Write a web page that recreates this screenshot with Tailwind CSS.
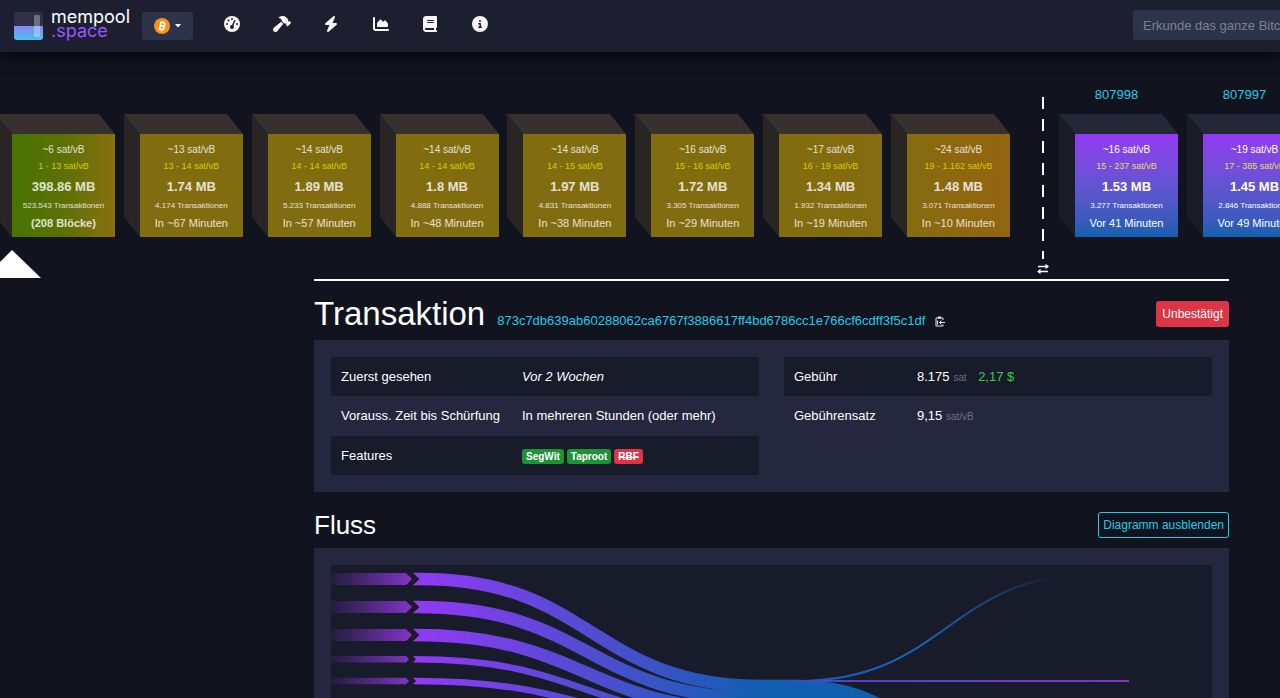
<!DOCTYPE html>
<html lang="de">
<head>
<meta charset="utf-8">
<meta name="viewport" content="width=device-width, initial-scale=1">
<title>Transaktion – mempool.space</title>
<script src="https://cdn.jsdelivr.net/npm/@tailwindcss/browser@4"></script>
</head>
<body class="h-screen overflow-hidden bg-[#11131f] font-['Liberation_Sans',Arial,sans-serif] text-[13px] text-white">

<svg class="hidden" aria-hidden="true">
  <symbol id="cube-mempool" viewBox="0 0 119 123">
    <path d="M0 0H103L119 20H16Z" fill="#38302f"/>
    <path d="M0 0L16 20V123L0 103Z" fill="#292525"/>
  </symbol>
  <symbol id="cube-chain" viewBox="0 0 119 123">
    <path d="M0 0H103L119 20H16Z" fill="#232738"/>
    <path d="M0 0L16 20V123L0 103Z" fill="#191b27"/>
  </symbol>
</svg>

<header class="flex h-[52px] items-center bg-[#1d1f31] pl-3.5 shadow-[0_0_15px_0_#000]">
  <a href="#" class="flex items-center gap-2" aria-label="mempool.space">
    <svg class="h-7 w-[29px]" viewBox="0 0 29 28">
      <defs>
        <linearGradient id="logo" x1="0" y1="0" x2="0" y2="1"><stop offset="0" stop-color="#8a84f5"/><stop offset="1" stop-color="#45c5ea"/></linearGradient>
        <clipPath id="logoclip"><rect width="29" height="28" rx="3"/></clipPath>
      </defs>
      <g clip-path="url(#logoclip)">
        <rect width="29" height="28" fill="#2e3149"/>
        <rect y="14" width="29" height="14" fill="url(#logo)"/>
        <rect x="20" y="3" width="6" height="22" rx="1" fill="#fff" opacity=".3"/>
      </g>
    </svg>
    <span class="flex w-[79px] flex-col pb-1 font-['Inter',sans-serif] text-[18px] leading-[14px]">
      <span>mempool</span>
      <span class="text-[#9857ff]">.space</span>
    </span>
  </a>
  <button class="ml-3 flex h-7 w-[51px] items-center justify-center gap-1 rounded-[3px] bg-[#2d3348]" aria-label="Netzwerk wählen">
    <svg class="size-4" viewBox="0 0 16 16"><circle cx="8" cy="8" r="8" fill="#f7931a"/><g transform="rotate(14 8 8)" fill="none" stroke="#fff" stroke-width="1.5"><path d="M5 4.6H8.7a1.6 1.6 0 0 1 0 3.3H6.3M6.3 7.9H9.1a1.8 1.8 0 0 1 0 3.5H5M6.3 4.6V11.4"/><path d="M7.2 2.8V4.6M9.2 2.8V4.6M7.2 11.4V13.2M9.2 11.4V13.2" stroke-width="1"/></g></svg>
    <svg class="h-1 w-2" viewBox="0 0 8 4"><path d="M1 0H7L4 3.5Z" fill="#fff"/></svg>
  </button>
  <nav class="ml-3.5 flex pb-1">
    <a href="#" aria-label="Dashboard" class="flex w-[50px] justify-center"><svg class="h-4 w-5" viewBox="0 0 512 512"><circle cx="256" cy="256" r="256" fill="#f5f5fa"/><g fill="#1d1f31"><circle cx="256" cy="96" r="32"/><circle cx="144" cy="144" r="32"/><circle cx="96" cy="256" r="32"/><circle cx="416" cy="256" r="32"/><circle cx="256" cy="352" r="64"/><path d="M352 130a24 24 0 0 1 12 32L290 330L246 311L320 142a24 24 0 0 1 32-12Z"/></g></svg></a>
    <a href="#" aria-label="Mining" class="flex w-[49px] justify-center"><svg class="h-4 w-5" viewBox="0 0 576 512" fill="#f5f5fa"><path d="M413.5 237.5c-28.2 4.8-58.2-3.6-80-25.4l-38.1-38.1C280.4 159 272 138.8 272 117.6V105.5L192.3 62c-5.3-2.9-8.6-8.6-8.3-14.7s3.9-11.5 9.5-14l47.2-21C259.1 4.2 279 0 299.2 0h18.1c36.7 0 72 14 98.7 39.1l44.6 42c24.2 22.8 33.2 55.7 26.6 86L503 183l8-8c9.4-9.4 24.6-9.4 33.9 0l24 24c9.4 9.4 9.4 24.6 0 33.9l-88 88c-9.4 9.4-24.6 9.4-33.9 0l-24-24c-9.4-9.4-9.4-24.6 0-33.9l8-8-17.5-17.5zM27.4 377.1L260.9 182.6c3.5 4.9 7.5 9.6 11.8 14l38.1 38.1c6 6 12.4 11.2 19.2 15.7L134.9 484.6c-14.5 17.4-36 27.4-58.6 27.4C34.1 512 0 477.8 0 435.7c0-22.6 10.1-44.1 27.4-58.6z"/></svg></a>
    <a href="#" aria-label="Lightning" class="flex w-[50px] justify-center"><svg class="h-4 w-5" viewBox="0 0 448 512" fill="#f5f5fa"><path d="M349.4 44.6c5.9-13.7 1.5-29.7-10.6-38.5s-28.6-8-39.9 1.8l-256 224c-10 8.8-13.6 22.9-8.9 35.3S50.7 288 64 288H175.5L98.6 467.4c-5.9 13.7-1.5 29.7 10.6 38.5s28.6 8 39.9-1.8l256-224c10-8.8 13.6-22.9 8.9-35.3s-16.6-20.7-30-20.7H272.5L349.4 44.6z"/></svg></a>
    <a href="#" aria-label="Grafiken" class="flex w-[49px] justify-center"><svg class="h-4 w-5" viewBox="0 0 512 512" fill="#f5f5fa"><path d="M64 64c0-17.7-14.3-32-32-32S0 46.3 0 64V400c0 44.2 35.8 80 80 80H480c17.7 0 32-14.3 32-32s-14.3-32-32-32H80c-8.8 0-16-7.2-16-16V64zm96 288H448c17.7 0 32-14.3 32-32V251.8c0-7.6-2.7-15-7.7-20.8l-65.8-76.8c-12.1-14.2-33.7-15-46.9-1.8l-21 21c-10 10-26.4 9.2-35.4-1.6l-39.2-47c-12.6-15.1-35.7-15.4-48.7-.6L135.9 215c-5.1 5.8-7.9 13.3-7.9 21.1v84c0 17.7 14.3 32 32 32z"/></svg></a>
    <a href="#" aria-label="Dokumentation" class="flex w-[50px] justify-center"><svg class="h-4 w-5" viewBox="0 0 448 512" fill="#f5f5fa"><path d="M96 0C43 0 0 43 0 96V416c0 53 43 96 96 96H384h32c17.7 0 32-14.3 32-32s-14.3-32-32-32V384c17.7 0 32-14.3 32-32V32c0-17.7-14.3-32-32-32H384 96zm0 384H352v64H96c-17.7 0-32-14.3-32-32s14.3-32 32-32zm32-240c0-8.8 7.2-16 16-16H336c8.8 0 16 7.2 16 16s-7.2 16-16 16H144c-8.8 0-16-7.2-16-16zm16 48H336c8.8 0 16 7.2 16 16s-7.2 16-16 16H144c-8.8 0-16-7.2-16-16s7.2-16 16-16z"/></svg></a>
    <a href="#" aria-label="Über" class="flex w-[49px] justify-center"><svg class="h-4 w-5" viewBox="0 0 512 512" fill="#f5f5fa"><path d="M256 512A256 256 0 1 0 256 0a256 256 0 1 0 0 512zM216 336h24V272H216c-13.3 0-24-10.7-24-24s10.7-24 24-24h48c13.3 0 24 10.7 24 24v88h8c13.3 0 24 10.7 24 24s-10.7 24-24 24H216c-13.3 0-24-10.7-24-24s10.7-24 24-24zm40-208a32 32 0 1 1 0 64 32 32 0 1 1 0-64z"/></svg></a>
  </nav>
  <form class="-mr-44 ml-auto w-[323px] shrink-0 pb-0.5">
    <input type="text" aria-label="Suche" placeholder="Erkunde das ganze Bitcoin-Ökosystem" class="block h-[30px] w-full rounded-[3px] bg-[#2d3348] px-2.5 text-[13px] placeholder:text-[#7c8192]">
  </form>
</header>

<section class="flex h-[227px] items-start overflow-hidden" aria-label="Blöcke">
  <div class="-ml-1 mt-[62px] flex w-[1014px] shrink-0 justify-between">
    <a href="#" class="relative block w-[119px] pt-5 pl-4">
      <svg class="absolute inset-0 h-[123px] w-[119px]"><use href="#cube-mempool"/></svg>
      <div class="relative flex h-[103px] flex-col items-center bg-linear-to-r from-[#477400] via-[#5c7006] to-[#88700f] pt-[9px] text-white/80">
        <div class="text-[10px] leading-[14px]">~6 sat/vB</div>
        <div class="text-[9px] leading-[18px] text-[#d5ce00]">1 - 13 sat/vB</div>
        <div class="text-[13px] leading-[23px] font-bold">398.86 MB</div>
        <div class="text-[8px] leading-[15px]">523.543 Transaktionen</div>
        <div class="text-[11px] leading-5 font-bold">(208 Blöcke)</div>
      </div>
      <svg class="absolute top-[136px] -left-3 h-7 w-[57px]" viewBox="0 0 57 28"><path d="M28 0L57 28H0Z" fill="#fff"/></svg>
    </a>
    <a href="#" class="relative block w-[119px] pt-5 pl-4">
      <svg class="absolute inset-0 h-[123px] w-[119px]"><use href="#cube-mempool"/></svg>
      <div class="relative flex h-[103px] flex-col items-center bg-[#826c10] pt-[9px] text-white/80">
        <div class="text-[10px] leading-[14px]">~13 sat/vB</div>
        <div class="text-[9px] leading-[18px] text-[#d5ce00]">13 - 14 sat/vB</div>
        <div class="text-[13px] leading-[23px] font-bold">1.74 MB</div>
        <div class="text-[8px] leading-[15px]">4.174 Transaktionen</div>
        <div class="text-[11px] leading-5">In ~67 Minuten</div>
      </div>
    </a>
    <a href="#" class="relative block w-[119px] pt-5 pl-4">
      <svg class="absolute inset-0 h-[123px] w-[119px]"><use href="#cube-mempool"/></svg>
      <div class="relative flex h-[103px] flex-col items-center bg-[#826c10] pt-[9px] text-white/80">
        <div class="text-[10px] leading-[14px]">~14 sat/vB</div>
        <div class="text-[9px] leading-[18px] text-[#d5ce00]">14 - 14 sat/vB</div>
        <div class="text-[13px] leading-[23px] font-bold">1.89 MB</div>
        <div class="text-[8px] leading-[15px]">5.233 Transaktionen</div>
        <div class="text-[11px] leading-5">In ~57 Minuten</div>
      </div>
    </a>
    <a href="#" class="relative block w-[119px] pt-5 pl-4">
      <svg class="absolute inset-0 h-[123px] w-[119px]"><use href="#cube-mempool"/></svg>
      <div class="relative flex h-[103px] flex-col items-center bg-[#826c10] pt-[9px] text-white/80">
        <div class="text-[10px] leading-[14px]">~14 sat/vB</div>
        <div class="text-[9px] leading-[18px] text-[#d5ce00]">14 - 14 sat/vB</div>
        <div class="text-[13px] leading-[23px] font-bold">1.8 MB</div>
        <div class="text-[8px] leading-[15px]">4.888 Transaktionen</div>
        <div class="text-[11px] leading-5">In ~48 Minuten</div>
      </div>
    </a>
    <a href="#" class="relative block w-[119px] pt-5 pl-4">
      <svg class="absolute inset-0 h-[123px] w-[119px]"><use href="#cube-mempool"/></svg>
      <div class="relative flex h-[103px] flex-col items-center bg-[#826c10] pt-[9px] text-white/80">
        <div class="text-[10px] leading-[14px]">~14 sat/vB</div>
        <div class="text-[9px] leading-[18px] text-[#d5ce00]">14 - 15 sat/vB</div>
        <div class="text-[13px] leading-[23px] font-bold">1.97 MB</div>
        <div class="text-[8px] leading-[15px]">4.831 Transaktionen</div>
        <div class="text-[11px] leading-5">In ~38 Minuten</div>
      </div>
    </a>
    <a href="#" class="relative block w-[119px] pt-5 pl-4">
      <svg class="absolute inset-0 h-[123px] w-[119px]"><use href="#cube-mempool"/></svg>
      <div class="relative flex h-[103px] flex-col items-center bg-[#826c10] pt-[9px] text-white/80">
        <div class="text-[10px] leading-[14px]">~16 sat/vB</div>
        <div class="text-[9px] leading-[18px] text-[#d5ce00]">15 - 16 sat/vB</div>
        <div class="text-[13px] leading-[23px] font-bold">1.72 MB</div>
        <div class="text-[8px] leading-[15px]">3.305 Transaktionen</div>
        <div class="text-[11px] leading-5">In ~29 Minuten</div>
      </div>
    </a>
    <a href="#" class="relative block w-[119px] pt-5 pl-4">
      <svg class="absolute inset-0 h-[123px] w-[119px]"><use href="#cube-mempool"/></svg>
      <div class="relative flex h-[103px] flex-col items-center bg-linear-to-r from-[#826c10] to-[#866b10] pt-[9px] text-white/80">
        <div class="text-[10px] leading-[14px]">~17 sat/vB</div>
        <div class="text-[9px] leading-[18px] text-[#d5ce00]">16 - 19 sat/vB</div>
        <div class="text-[13px] leading-[23px] font-bold">1.34 MB</div>
        <div class="text-[8px] leading-[15px]">1.932 Transaktionen</div>
        <div class="text-[11px] leading-5">In ~19 Minuten</div>
      </div>
    </a>
    <a href="#" class="relative block w-[119px] pt-5 pl-4">
      <svg class="absolute inset-0 h-[123px] w-[119px]"><use href="#cube-mempool"/></svg>
      <div class="relative flex h-[103px] flex-col items-center bg-linear-to-r from-[#866b10] to-[#93640f] pt-[9px] text-white/80">
        <div class="text-[10px] leading-[14px]">~24 sat/vB</div>
        <div class="text-[9px] leading-[18px] text-[#d5ce00]">19 - 1.162 sat/vB</div>
        <div class="text-[13px] leading-[23px] font-bold">1.48 MB</div>
        <div class="text-[8px] leading-[15px]">3.071 Transaktionen</div>
        <div class="text-[11px] leading-5">In ~10 Minuten</div>
      </div>
    </a>
  </div>

  <div class="mt-[45px] ml-[25px] flex w-4 shrink-0 flex-col items-center gap-1">
    <svg class="h-[162px] w-0.5" viewBox="0 0 2 162"><path d="M1 0V162" stroke="#fff" stroke-width="2" stroke-dasharray="12 10"/></svg>
    <button aria-label="Zeitrichtung umkehren"><svg class="h-3 w-3" viewBox="0 0 12 12"><path d="M1 3.5H9M3 8.5H11" stroke="#fff" stroke-width="1.5"/><path d="M8.500 .8L12 3.500L8.500 6.200ZM3.500 5.800L0 8.500L3.500 11.200Z" fill="#fff"/></svg></button>
  </div>

  <div class="mt-[34px] ml-2 flex shrink-0 gap-[9px]">
    <div class="w-[119px]">
      <a href="#" class="block h-7 pr-1 text-center text-[13px] leading-[18px] text-[#22cbe6]">807998</a>
      <a href="#" class="relative block pt-5 pl-4">
        <svg class="absolute inset-0 h-[123px] w-[119px]"><use href="#cube-chain"/></svg>
        <div class="relative flex h-[103px] flex-col items-center bg-linear-to-b from-[#9339f4] to-[#105fb0] pt-[9px]">
          <div class="text-[10px] leading-[14px]">~16 sat/vB</div>
          <div class="text-[9px] leading-[18px] text-[#f0dc5a]">15 - 237 sat/vB</div>
          <div class="text-[13px] leading-[23px] font-bold">1.53 MB</div>
          <div class="text-[8px] leading-[15px]">3.277 Transaktionen</div>
          <div class="text-[11px] leading-5">Vor 41 Minuten</div>
        </div>
      </a>
    </div>
    <div class="w-[119px]">
      <a href="#" class="block h-7 pr-1 text-center text-[13px] leading-[18px] text-[#22cbe6]">807997</a>
      <a href="#" class="relative block pt-5 pl-4">
        <svg class="absolute inset-0 h-[123px] w-[119px]"><use href="#cube-chain"/></svg>
        <div class="relative flex h-[103px] flex-col items-center bg-linear-to-b from-[#9339f4] to-[#105fb0] pt-[9px]">
          <div class="text-[10px] leading-[14px]">~19 sat/vB</div>
          <div class="text-[9px] leading-[18px] text-[#f0dc5a]">17 - 385 sat/vB</div>
          <div class="text-[13px] leading-[23px] font-bold">1.45 MB</div>
          <div class="text-[8px] leading-[15px]">2.846 Transaktionen</div>
          <div class="text-[11px] leading-5">Vor 49 Minuten</div>
        </div>
      </a>
    </div>
  </div>
</section>

<main class="mr-[51px] ml-[314px] border-t-2 border-white">
  <div class="flex h-[59px] items-start justify-between pt-[13px]">
    <div class="flex items-baseline">
      <h1 class="text-[33px] leading-10">Transaktion</h1>
      <a href="#" class="ml-3 text-[13px] text-[#22cbe6]">873c7db639ab60288062ca6767f3886617ff4bd6786cc1e766cf6cdff3f5c1df</a>
      <button class="ml-2.5 self-center pt-3.5" aria-label="Kopieren"><svg class="h-[11px] w-2.5" viewBox="0 0 10 11" fill="none" stroke="#e8e8ee"><path d="M8 4V2H1V10H8V8.500"/><path d="M3 1.500H6" stroke-width="2"/><path d="M10 6.500H5M6.500 4.500L4.500 6.500L6.500 8.500M2.500 4.500V8.500"/></svg></button>
    </div>
    <button class="mt-[7px] h-[26px] rounded-[3px] bg-[#dc3545] px-1.5 text-[12px]">Unbestätigt</button>
  </div>

  <section class="grid grid-cols-2 items-start gap-[25px] bg-[#24273e] p-[17px]">
    <table class="w-full table-fixed text-left">
      <colgroup><col class="w-[181px]"><col></colgroup>
      <tr class="h-[39px] bg-[#181b2a]"><th class="pl-2.5 font-normal whitespace-nowrap">Zuerst gesehen</th><td class="pl-2.5 italic">Vor 2 Wochen</td></tr>
      <tr class="h-10"><th class="pl-2.5 font-normal whitespace-nowrap">Vorauss. Zeit bis Schürfung</th><td class="pl-2.5">In mehreren Stunden (oder mehr)</td></tr>
      <tr class="h-[39px] bg-[#181b2a]"><th class="pl-2.5 font-normal">Features</th><td class="pl-2.5"><div class="flex gap-[3px] pt-0.5 text-[10px] leading-[15px] font-bold"><span class="rounded-[3px] bg-[#1d9237] px-1">SegWit</span><span class="rounded-[3px] bg-[#1d9237] px-1">Taproot</span><span class="rounded-[3px] bg-[#dc3545] px-1 line-through">RBF</span></div></td></tr>
    </table>
    <table class="w-full table-fixed text-left">
      <colgroup><col class="w-[123px]"><col></colgroup>
      <tr class="h-[39px] bg-[#181b2a]"><th class="pl-2.5 font-normal">Gebühr</th><td class="pl-2.5">8.175 <span class="text-[10px] text-[#6b6f84]">sat</span> <span class="ml-2 text-[#3bcc49]">2,17 $</span></td></tr>
      <tr class="h-10"><th class="pl-2.5 font-normal">Gebührensatz</th><td class="pl-2.5">9,15 <span class="text-[10px] text-[#6b6f84]">sat/vB</span></td></tr>
    </table>
  </section>

  <div class="flex h-14 items-center justify-between pt-2.5">
    <h2 class="text-[26px]">Fluss</h2>
    <button class="h-[26px] rounded-[3px] border border-[#22cbe6] px-1 text-[12px] text-[#22cbe6]">Diagramm ausblenden</button>
  </div>

  <section class="bg-[#24273e] p-[17px]">
    <div class="bg-[#181b2a]">
      <svg class="h-[300px] w-full" viewBox="331 565 881 300" preserveAspectRatio="xMinYMin slice">
        <defs>
          <linearGradient id="in" gradientUnits="userSpaceOnUse" x1="414" y1="0" x2="765" y2="0"><stop offset="0" stop-color="#9339f4"/><stop offset="1" stop-color="#105fb0"/></linearGradient>
          <linearGradient id="lead" gradientUnits="userSpaceOnUse" x1="331" y1="0" x2="412" y2="0"><stop offset="0" stop-color="#8134c8" stop-opacity=".1"/><stop offset="1" stop-color="#8134c8"/></linearGradient>
          <linearGradient id="fee" gradientUnits="userSpaceOnUse" x1="797" y1="0" x2="1060" y2="0"><stop offset="0" stop-color="#105fb0"/><stop offset=".5" stop-color="#1a62b4"/><stop offset="1" stop-color="#1a62b4" stop-opacity="0"/></linearGradient>
          <linearGradient id="out" gradientUnits="userSpaceOnUse" x1="780" y1="0" x2="1129" y2="0"><stop offset="0" stop-color="#105fb0"/><stop offset=".1" stop-color="#4747c8"/><stop offset="1" stop-color="#8134c8"/></linearGradient>
        </defs>
        <g fill="url(#lead)">
          <path d="M331 573H406L412 579L406 585H331Z"/>
          <path d="M331 601H406L412 607L406 613H331Z"/>
          <path d="M331 629H406L412 635L406 641H331Z"/>
          <path d="M331 656H406L409 659.300L406 662.600H331Z"/>
          <path d="M331 677.700H406L409 681L406 684.300H331Z"/>
        </g>
        <g fill="none" stroke="url(#in)">
          <path stroke-width="12.500" d="M413 579H421C592 579 592 686 763 686H800"/>
          <path stroke-width="12.500" d="M413 607H418C589 607 589 698 760 698H800"/>
          <path stroke-width="12.500" d="M413 635H415C586 635 586 710 757 710H800"/>
          <path stroke-width="6.600" d="M413 659.300H415C586 659.300 586 719.500 757 719.500"/>
          <path stroke-width="6.600" d="M413 681H415C586 681 586 726 757 726"/>
        </g>
        <g fill="#181b2a">
          <path d="M412 572L419.500 579L412 586ZM412 600L419.500 607L412 614ZM412 628L419.500 635L412 642ZM412 655L416 659.300L412 663.600ZM412 676.700L416 681L412 685.300Z"/>
        </g>
        <path d="M760 680H800C840 681 862 689 884 700V760H760Z" fill="#105fb0"/>
        <path d="M790 681H797C947 681 947 574 1097 574" fill="none" stroke="url(#fee)" stroke-width="2"/>
        <path d="M790 680H1129V682H790Z" fill="url(#out)"/>
      </svg>
    </div>
  </section>
</main>
</body>
</html>
